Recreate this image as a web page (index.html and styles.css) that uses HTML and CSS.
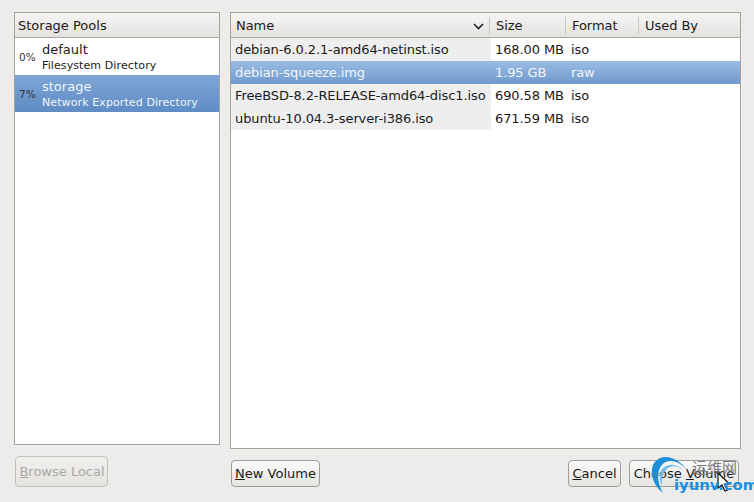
FILE: index.html
```html
<!DOCTYPE html>
<html lang="en">
<head>
<meta charset="utf-8">
<title>Storage Pools</title>
<link rel="stylesheet" href="styles.css">
</head>
<body>
<div class="dialog">
  <div class="side">
    <div class="panel pools">
      <div class="head"><div class="hcell">Storage Pools</div></div>
      <div class="pool">
        <span class="pct">0%</span>
        <div class="pinfo"><div class="pname">default</div><div class="ptype">Filesystem Directory</div></div>
      </div>
      <div class="pool sel">
        <span class="pct">7%</span>
        <div class="pinfo"><div class="pname">storage</div><div class="ptype">Network Exported Directory</div></div>
      </div>
    </div>
    <div class="btnrow left"><button class="btn off"><u>B</u>rowse Local</button></div>
  </div>
  <div class="main">
    <div class="panel vols">
      <div class="head cols">
        <div class="hcell c1">Name<svg class="chev" width="11" height="7" viewBox="0 0 11 7"><path d="M1 1l4.500 4.500L10 1" fill="none" stroke="#222" stroke-width="1.600"/></svg></div>
        <div class="hcell c2">Size</div>
        <div class="hcell c3">Format</div>
        <div class="hcell c4">Used By</div>
      </div>
      <div class="row"><div class="c1 cell">debian-6.0.2.1-amd64-netinst.iso</div><div class="c2 cell">168.00 MB</div><div class="c3 cell">iso</div></div>
      <div class="row sel"><div class="c1 cell">debian-squeeze.img</div><div class="c2 cell">1.95 GB</div><div class="c3 cell">raw</div></div>
      <div class="row"><div class="c1 cell">FreeBSD-8.2-RELEASE-amd64-disc1.iso</div><div class="c2 cell">690.58 MB</div><div class="c3 cell">iso</div></div>
      <div class="row"><div class="c1 cell">ubuntu-10.04.3-server-i386.iso</div><div class="c2 cell">671.59 MB</div><div class="c3 cell">iso</div></div>
    </div>
    <div class="btnrow right">
      <button class="btn new"><u>N</u>ew Volume</button>
      <span class="grow"></span>
      <button class="btn cancel"><u>C</u>ancel</button>
      <button class="btn choose">Choose <u>V</u>olume</button>
    </div>
  </div>
</div>
<div class="mark">
  <svg class="arcs" width="50" height="42" viewBox="0 0 50 42">
    <path d="M37 16C28 3 12 -2 4 9C-1 18 3 32 13 39C8 30 6 20 11 12C17 4 28 6 37 16Z" fill="#1c8fd6"/>
    <path d="M33 16C25 8 15 10 11 17C9 23 10 28 12 31C12 24 13 18 18 14C23 11 28 12 33 16Z" fill="#6dbdec"/>
  </svg>
  <span class="cn">运维网</span>
  <svg class="cursor" width="14" height="20" viewBox="0 0 14 20"><path d="M1 1v15l4-3 3 6 2.500-1-3-6h5z" fill="#fff" stroke="#111" stroke-width="1.200"/></svg>
  <span class="en">iyunv.com</span>
</div>
</body>
</html>
```

FILE: styles.css
```css
* { box-sizing: border-box; }
html, body { margin: 0; height: 100%; }
body {
  width: 754px;
  height: 502px;
  background: #edecea;
  font-family: "DejaVu Sans", sans-serif;
  font-size: 13px;
  color: #1a1a1a;
  overflow: hidden;
  position: relative;
}
.dialog { display: flex; gap: 10px; padding: 12px 13px 0 14px; }
.side { width: 206px; }
.main { width: 511px; }
.panel { background: #fff; border: 1px solid #a5a29c; }
.pools { height: 433px; }
.vols { height: 437px; }
.head {
  height: 25px;
  display: flex;
  align-items: center;
  background: linear-gradient(#f6f5f4, #e3e2df);
  border-bottom: 1px solid #a9a7a2;
}
.hcell { padding-left: 3px; white-space: nowrap; }
.pool { height: 37px; display: flex; align-items: center; }
.pool.sel, .row.sel { color: #f2f5fa; }
.pool.sel { background: linear-gradient(#7ea5d7, #5f8cc3); }
.pct { width: 27px; padding-left: 4px; font-size: 10.500px; color: #333; }
.pinfo { display: flex; flex-direction: column; padding-top: 2px; }
.pname { line-height: 16px; }
.ptype { font-size: 11px; line-height: 15px; letter-spacing: 0.100px; }
.cols .hcell { height: 17px; line-height: 17px; border-left: 1px solid #c9c7c3; padding-left: 6px; position: relative; letter-spacing: -0.050px; }
.cols .c1 { border-left: 0; padding-left: 5px; }
.c1 { width: 258px; }
.c2 { width: 76px; }
.c3 { width: 73px; }
.chev { position: absolute; left: 242px; top: 6px; }
.row { height: 23px; display: flex; align-items: center; letter-spacing: -0.100px; }
.row .c1 { width: 260px; height: 100%; background: #eeeeee; padding-left: 4px; line-height: 23px; white-space: nowrap; }
.row .c2 { width: 76px; padding-left: 4px; }
.row .c3 { padding-left: 4px; }
.row.sel { background: linear-gradient(#9abce3, #6f9acd); }
.row.sel .c1 { background: none; }
.btnrow { display: flex; align-items: flex-end; }
.btnrow.left { margin-top: 11px; padding-left: 1px; }
.btnrow.right { margin-top: 11px; padding-left: 1px; padding-right: 2px; gap: 8px; }
.grow { flex: 1; }
.btn {
  height: 27px;
  padding: 0;
  font: inherit;
  color: #1a1a1a;
  background: linear-gradient(#fafafa, #e6e5e2);
  border: 1px solid #a09d97;
  border-radius: 4px;
  white-space: nowrap;
}
.btn.new { width: 89px; }
.btn.cancel { width: 53px; }
.btn.choose { width: 110px; }
.btn.off { width: 93px; height: 31px; color: #aaa8a4; background: linear-gradient(#f1f0ee, #e4e3e0); border-color: #c2c0bb; padding: 0 0 0 1px; }
.mark { position: absolute; left: 650px; top: 454px; width: 104px; height: 48px; pointer-events: none; }
.arcs { position: absolute; left: 0; top: 0; }
.cn { position: absolute; left: 42px; top: 4px; font-family: "Noto Sans CJK SC", sans-serif; font-size: 15px; line-height: 18px; color: #7d7d7b; }
.en { position: absolute; left: 24px; top: 22px; font-size: 14.800px; line-height: 18px; font-weight: bold; color: #1a8fe0; }
.cursor { position: absolute; left: 67px; top: 18px; }
```
